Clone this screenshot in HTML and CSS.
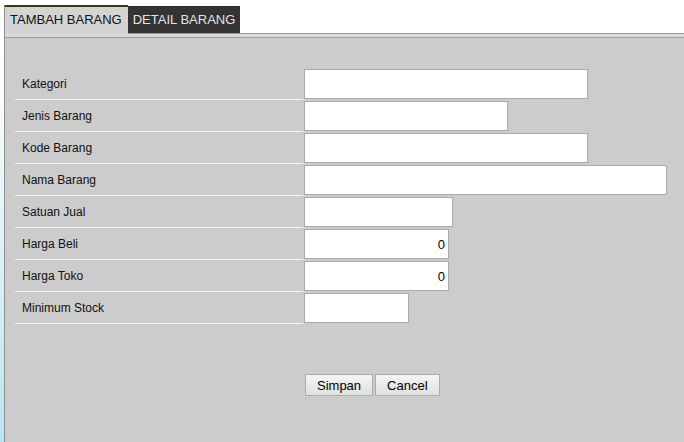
FILE: index.html
```html
<!DOCTYPE html>
<html>
<head>
<meta charset="utf-8">
<link rel="stylesheet" href="styles.css">
</head>
<body>
<div class="box">
  <div class="tabs">
    <div class="tab active">TAMBAH BARANG</div>
    <div class="tab">DETAIL BARANG</div>
    <div class="tab-fill"></div>
  </div>
  <div class="strip"></div>
  <div class="panel">
    <form class="form">
      <div class="lbl">Kategori</div>
      <div class="cell"><input class="inp w284" type="text"></div>
      <div class="lbl">Jenis Barang</div>
      <div class="cell"><input class="inp w204" type="text"></div>
      <div class="lbl">Kode Barang</div>
      <div class="cell"><input class="inp w284" type="text"></div>
      <div class="lbl">Nama Barang</div>
      <div class="cell"><input class="inp w363" type="text"></div>
      <div class="lbl">Satuan Jual</div>
      <div class="cell"><input class="inp w149" type="text"></div>
      <div class="lbl">Harga Beli</div>
      <div class="cell"><input class="inp w145 num" type="text" value="0"></div>
      <div class="lbl">Harga Toko</div>
      <div class="cell"><input class="inp w145 num" type="text" value="0"></div>
      <div class="lbl">Minimum Stock</div>
      <div class="cell"><input class="inp w105" type="text"></div>
      <div class="actions">
        <button type="button" class="btn">Simpan</button>
        <button type="button" class="btn">Cancel</button>
      </div>
    </form>
  </div>
</div>
</body>
</html>
```
FILE: styles.css
```css
html, body {
  margin: 0;
  padding: 0;
  height: 100%;
}
body {
  background: linear-gradient(to bottom, #ffffff 0px, #ffffff 40px, #f4fbfd 120px, #b6e7f1 442px);
  font-family: "Liberation Sans", Arial, sans-serif;
  overflow: hidden;
}
.box {
  margin: 5px 0 0 4px;
  border-left: 1px solid #8e8e8e;
}
.tabs {
  display: flex;
  height: 29px;
  background: #ffffff;
}
.tab {
  box-sizing: border-box;
  margin-top: 1px;
  height: 28px;
  padding: 0 5px;
  background: #333333;
  color: #e4e4e4;
  font-size: 13px;
  line-height: 27px;
  border-bottom: 1px solid #9a9a9a;
  white-space: nowrap;
}
.tab.active {
  margin-top: 0;
  height: 29px;
  padding: 0 6px 0 5px;
  background: #d4d4d4;
  color: #111111;
  border-top: 2px solid #3a3712;
  border-bottom: none;
  line-height: 26px;
}
.tab-fill {
  flex: 1;
  border-bottom: 1px solid #9a9a9a;
}
.strip {
  height: 3px;
  background: #dadada;
  border-bottom: 1px solid #9c9c9c;
}
.panel {
  box-sizing: border-box;
  background: #cccccc;
  padding: 30px 0 0 10px;
  height: 404px;
}
.form {
  display: grid;
  grid-template-columns: 288px 1fr;
  grid-auto-rows: 32px;
  margin: 0;
}
.lbl {
  box-sizing: border-box;
  height: 32px;
  border-bottom: 1px solid #f0f0f0;
  padding-left: 7px;
  display: flex;
  align-items: center;
  font-size: 12px;
  color: #111111;
}
.cell {
  padding: 1px 0 1px 1px;
}
.inp {
  box-sizing: border-box;
  display: block;
  height: 30px;
  margin: 0;
  border: 1px solid #a9a9ab;
  background: #ffffff;
  padding: 0 3px;
  font-family: "Liberation Sans", Arial, sans-serif;
  font-size: 13px;
  color: #000000;
  outline: none;
}
.num { text-align: right; }
.w284 { width: 284px; }
.w204 { width: 204px; }
.w363 { width: 363px; }
.w149 { width: 149px; }
.w145 { width: 145px; }
.w105 { width: 105px; }
.actions {
  grid-column: 2;
  display: flex;
  gap: 2px;
  margin-top: 50px;
  padding-left: 2px;
  align-items: flex-start;
}
.btn {
  box-sizing: border-box;
  height: 22px;
  margin: 0;
  padding: 1px 11px 0;
  border: 1px solid #adadad;
  border-radius: 0;
  background: linear-gradient(to bottom, #f5f5f5, #e0e0e0);
  font-family: "Liberation Sans", Arial, sans-serif;
  font-size: 13px;
  color: #000000;
  line-height: 20px;
}
```
